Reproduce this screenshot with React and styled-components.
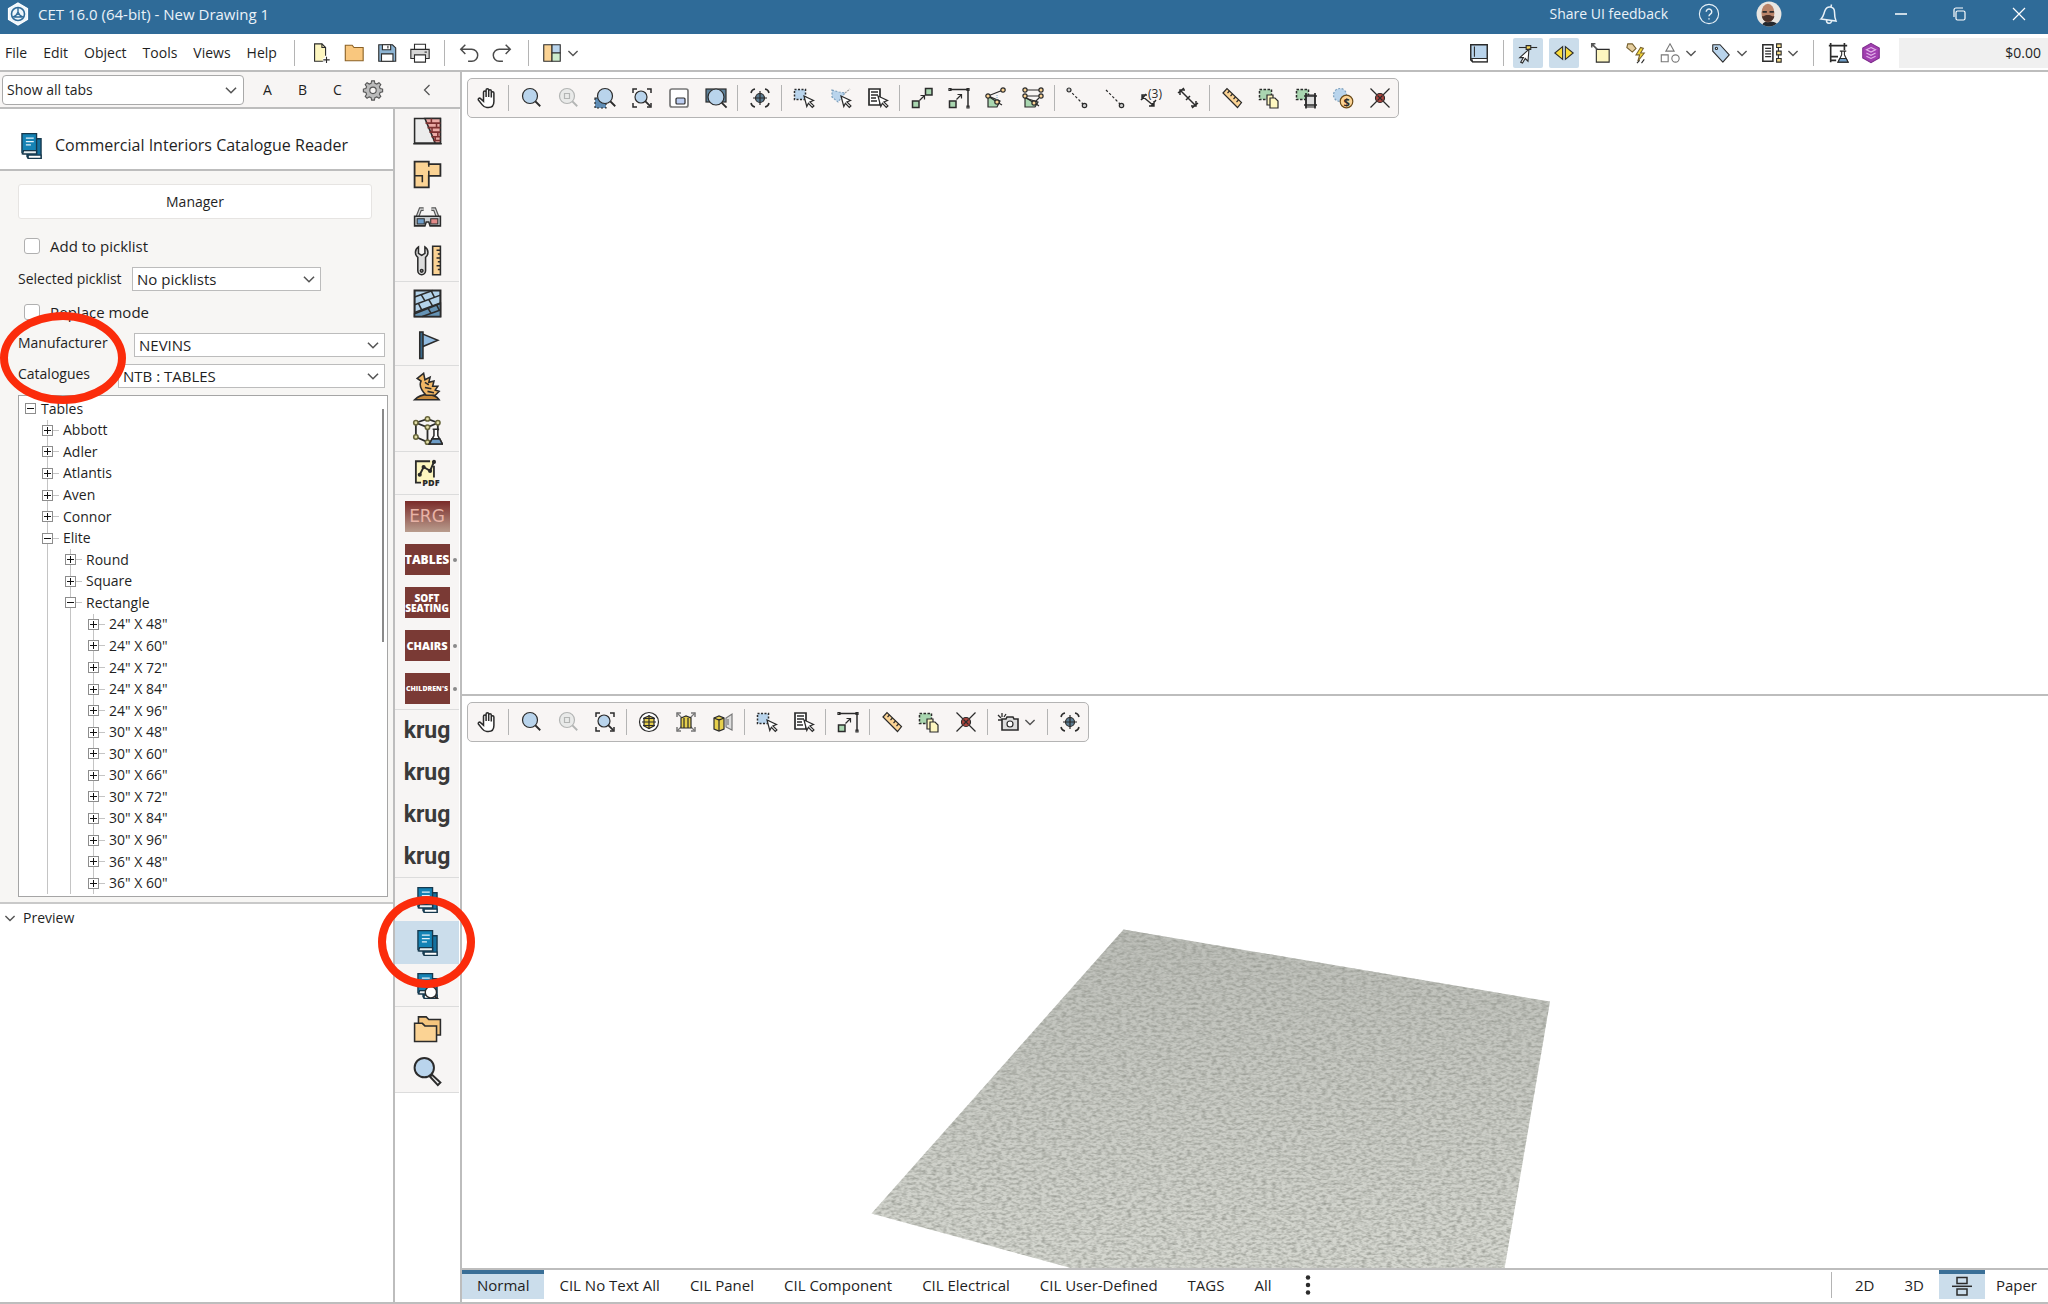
import React, {useState} from 'react';
import styled, {createGlobalStyle, css} from 'styled-components';

const INK = '#2b2b2b';
const BLUE = '#b9d4ec';
const GREEN = '#a9d6b0';
const YELLOW = '#fdf6c0';
const ORANGE = '#fbd394';
const LINE = '#bdbdbd';

const GlobalStyle = createGlobalStyle`
  * {
    box-sizing: border-box;
  }

  body {
    margin: 0;
    background: #fff;
    color: #1f1f1f;
    font: 14px/20px "Open Sans", "Noto Sans", sans-serif;
  }

  button, select, input {
    margin: 0;
    padding: 0;
    border: 0;
    background: none;
    color: inherit;
    font: inherit;
  }
`;

/* ---------- icons, drawn on a 24px grid ---------- */

const Lens = ({cx = 11, cy = 10, r = 7, fill = BLUE, color = INK}) => (
    <g stroke={color}>
        <path d={`M${cx + r * 0.7} ${cy + r * 0.7}L${cx + r * 0.7 + 5} ${cy + r * 0.7 + 5}`} strokeWidth="1.8"/>
        <circle cx={cx} cy={cy} r={r} fill={fill}/>
    </g>
);

const Pointer = () => <path d="M12 10l9.500 4.500-3.600 1.400 4 4-1.600 1.400-3.900-4-1.600 3.200z" fill="#fff"/>;

const Corners = ({color = INK}) => (
    <path d="M3 7V3h4M17 3h4v4M21 17v4h-4M7 21H3v-4" stroke={color} strokeWidth="1.500"/>
);

const Books = () => (
    <g stroke="#16384d">
        <path d="M8 6h12.500v17.500H9.500L8 22z" fill="#14719f"/>
        <path d="M9 23.500h11.500v-3H9z" fill="#fff"/>
        <path d="M3.500 1.500h13v18h-12l-1-1z" fill="#1583b5"/>
        <path d="M4 19.500h12.500v-3H5z" fill="#e9eef0"/>
        <path d="M7 5.500h7M7 8.500h7M7 11.500h4.500" stroke="#e4f2fa"/>
    </g>
);

const ICONS = {
    newFile: <><path d="M5 2h8l4 4v15H5z" fill={YELLOW}/><path d="M13 2v4h4"/><path d="M18 15v9M14 19.500h8" stroke="#fff" strokeWidth="4"/><path d="M18 16v7M14.500 19.500h7"/></>,
    folder: <path d="M2.500 3.500h7.500l2 2.500h10v14.500H2.500z" fill="#f9c77e" stroke="#8a6024"/>,
    save: <><path d="M3 3h15l3.500 3.500V21H3z" fill="#8db4d3"/><path d="M7 3h9v5.500H7zM6 13h12.500v8H6z" fill="#fff"/><path d="M13 4v3"/></>,
    print: <><path d="M6 8V2.500h12V8" fill="#fff"/><path d="M2 8h20v10H2z" fill="#d6d6d6"/><path d="M6 14h12v8H6z" fill="#fff"/><path d="M17 11h2.500"/></>,
    undo: <path d="M8 3L3 8l5 5M3 8h12a6.500 6.500 0 0 1 0 13h-4" stroke="#4a4a4a" strokeWidth="1.600"/>,
    redo: <path d="M16 3l5 5-5 5M21 8H9a6.500 6.500 0 0 0 0 13h4" stroke="#4a4a4a" strokeWidth="1.600"/>,
    layout: <><path d="M3 3h9v18H3z" fill={ORANGE}/><path d="M12 3h9v9h-9z" fill={BLUE}/><path d="M12 12h9v9h-9z" fill="#cdeccd"/></>,
    book: <><path d="M3 3h18v18.500H5l-2-2z" fill={BLUE} strokeWidth="1.600"/><path d="M4 18h17v3.500H5z" fill="#fff"/><path d="M7 5v11"/></>,
    snap: <><path d="M2 6h20"/><path d="M10 4h5v4h-5z" fill="#f5d65b"/><path d="M13 8L3 17h4l-3 5 2 1 3-5 3 3z" fill="#fff"/></>,
    arrows: <path d="M10.500 5v14L2 12zM13.500 5v14l8.500-7z" fill="#f9dc3c"/>,
    noteLink: <><path d="M8 8h14v14H8z" fill={YELLOW}/><path d="M9 8L3 2M3 6V2h4" stroke="#555" strokeWidth="1.700"/></>,
    bolt: <><path d="M3 2h5l4 5-4 4-6-5z" fill="#e6cfa0" stroke="#76602f"/><path d="M17 6l-5 8h4l-2 7 7-9h-4l3-5z" fill="#f9dc3c" stroke="#76602f"/><path d="M13 23l3-3M18 23l3-4"/></>,
    shapes: <g stroke="#777"><path d="M12 2l4.500 8h-9z"/><path d="M2.500 14h7.500v7.500H2.500z"/><circle cx="18" cy="18" r="4"/></g>,
    tag: <><path d="M3 3h8l10 11-7 8L3 10z" fill={BLUE} strokeLinejoin="round"/><circle cx="7" cy="7" r="1.200" fill="#fff"/></>,
    sheet: <><path d="M2 3h11v18H2z" fill="#fff" strokeWidth="1.700"/><path d="M4.500 7H11M4.500 10H11M4.500 13H11M4.500 16H11"/><path d="M19 4v16"/><path d="M17 2h5v4h-5zM17 10h5v4h-5zM17 18h5v4h-5z" fill="#f5dc8a"/></>,
    frameFlask: <><path d="M4 1v21M19 1v8M2 4h20M4 16h8M4 20h6" strokeWidth="1.800"/><path d="M14 10h7M16 10v4l-4 8h11l-4-8v-4" fill="#fff"/><path d="M14 18h7l2 4H12z" fill="#6d9cc6"/></>,
    gem: <><path d="M12 1.500l9 5v11l-9 5-9-5v-11z" fill="#a13fb0" stroke="#7e2c8c"/><path d="M12 6l5 2.500-5 2.500-5-2.500zM7 12l5 2.500 5-2.500M7 15.500l5 2.500 5-2.500" stroke="#e3b3ea"/></>,
    hand: <path d="M8.500 13V6.200a1.300 1.300 0 0 1 2.600 0V11M11.100 6.200V4a1.300 1.300 0 0 1 2.600 0v7M13.700 5a1.300 1.300 0 0 1 2.600 0v6.500M16.300 7a1.300 1.300 0 0 1 2.600 0v8.500c0 3.500-2 6-5.500 6h-1.600c-2.200 0-3.300-1-4.500-2.600L3.400 14c-.7-1.200 1-2.600 2.200-1.400l2.900 2.600V13" fill="#fff" strokeWidth="1.500"/>,
    zoom: <Lens r={7.5}/>,
    zoomOff: <><Lens r={7.5} fill="#e9eae9" color="#b3b5b4"/><path d="M8.500 7.500h5v5h-5z" stroke="#b3b5b4"/></>,
    zoomArea: <><path d="M2 12h11v10H2z" fill="#5f8cb4" strokeDasharray="2 2"/><Lens cx={12} r={7.5}/></>,
    zoomFit: <><Corners/><Lens cx={11} cy={11} r={6}/></>,
    pip: <><rect x="3" y="3" width="18" height="18" rx="2" fill="#fff" stroke="#777" strokeWidth="1.700"/><rect x="9" y="12" width="9" height="6" rx="1" fill="#bccdf0"/></>,
    zoomWindow: <><rect x="2" y="3" width="20" height="13" fill="#5f839c"/><Lens cx={12} cy={11} r={8}/></>,
    target: <><path d="M3 7a5 5 0 0 1 4-4M17 3a5 5 0 0 1 4 4M21 17a5 5 0 0 1-4 4M7 21a5 5 0 0 1-4-4" strokeWidth="1.500"/><circle cx="12" cy="12" r="4.500" fill="#5c7c92"/><path d="M12 5v14M5 12h14"/></>,
    selectBox: <><path d="M2.500 3.500h11v10h-11z" fill={BLUE} strokeDasharray="2 1.500" strokeWidth="1.500"/><Pointer/></>,
    selectPath: <><path d="M3 4l7 2 6 1-7 9-6-5z" fill={BLUE} stroke="#7da0bd" strokeDasharray="2 1.500"/><path d="M16 7l5-4" stroke="#999" strokeDasharray="2 1"/><Pointer/></>,
    selectList: <><path d="M3 3h11v16H3z" fill="#fff" strokeWidth="1.700"/><path d="M5 6h7M5 9h7M5 12h5M5 15h6" strokeWidth="1.400"/><Pointer/></>,
    scale: <><path d="M2.500 15h6.500v6.500H2.500zM15.500 2.500H22V9h-6.500z" fill={GREEN} strokeWidth="1.500"/><path d="M9.500 14.500l5-5M10.500 9.500h4v4"/></>,
    stretch: <><path d="M3 3.500h18V21" strokeWidth="1.500"/><path d="M2 2.500h2v2H2zM20 2.500h2v2h-2zM20 20h2v2h-2z"/><path d="M2.500 15H9v6.500H2.500z" fill={GREEN} strokeWidth="1.500"/><path d="M9.500 13.500l5-5M10.500 8.500h4v4"/></>,
    reshape: <><path d="M4 10v11h9l3-6z" fill={GREEN}/><path d="M4 10l15-6M4 10l9 6 5 3"/><path d="M13 9v6" stroke="#8db4d3" strokeDasharray="1 1"/><circle cx="19" cy="4" r="2.200" fill={ORANGE}/><circle cx="4" cy="10" r="2.200" fill={ORANGE}/><circle cx="13" cy="16" r="2.200" fill={ORANGE}/></>,
    reshapeAll: <><path d="M4 12v9h10l3-5z" fill={GREEN}/><path d="M4 4h16M4 10h16M4 11l9 6 5-5M14 17l4 3"/>{[[4, 4], [20, 4], [4, 10], [20, 10], [13, 17]].map(([x, y]) => <circle key={`${x}-${y}`} cx={x} cy={y} r="2.100" fill={ORANGE}/>)}</>,
    lineEnds: <><path d="M4 4l16 16" strokeDasharray="2.500 2"/><circle cx="4" cy="4" r="2" fill="#ccc"/><circle cx="19.500" cy="19.500" r="2.200" fill="#ccc"/></>,
    lineEnd: <><path d="M4 4l16 16" strokeDasharray="2.500 2"/><circle cx="19.500" cy="19.500" r="2.200" fill="#ccc"/></>,
    measureThree: <><path d="M3 10l12 10M3 14v-5h5M10 20h5v-5M7 8l-5 6M17 14l-5 6" strokeWidth="1.400"/><text x="9" y="12" fontSize="12" fill={INK} stroke="none" fontFamily="Open Sans">(3)</text></>,
    measure: <path d="M4 4l16 16M4 9V4h5M15 20h5v-5M2 7l6-5M16 22l6-5M10 14l4-4" strokeWidth="1.500"/>,
    ruler: <><path d="M3 7l4-4.500 14.500 14-4 5z" fill={ORANGE}/><path d="M9.500 5l-2 2M12.500 8l-2 2M15.500 11l-2 2M18.500 14l-2 2"/></>,
    copySel: <><path d="M2.500 3.500h12v10h-12z" fill={GREEN} strokeDasharray="2.500 1.500" strokeWidth="1.500"/><path d="M10 9h6v10h-6z" fill={YELLOW}/><path d="M13 12h5l3 3v7h-8z" fill={YELLOW}/></>,
    gridSel: <><path d="M2.500 3.500h12v10h-12z" fill={GREEN} strokeDasharray="2.500 1.500" strokeWidth="1.500"/><path d="M12 9h9v12h-9z" fill="#ddd"/><path d="M12 7v15.500M21 7v15.500M10 10h13M10 19h13" strokeWidth="1.700"/></>,
    priceSel: <><circle cx="9" cy="9" r="6.500" fill={BLUE} stroke="#7da0bd" strokeDasharray="2 1.500"/><circle cx="15.500" cy="15.500" r="6.300" fill={ORANGE} stroke="#6b4a17"/><text x="12.500" y="19.500" fontSize="11" fontWeight="700" fill={INK} stroke="none" fontFamily="Open Sans">$</text></>,
    cut: <><path d="M2.500 2.500l19 19M21.500 2.500l-19 19"/><circle cx="12" cy="12" r="4.500" fill="#b0433c"/><path d="M9.500 9.500l5 5M14.500 9.500l-5 5"/></>,
    orbit: <><circle cx="12" cy="12" r="9.500" fill="#fff"/><path d="M7 8l5-2 5 2v8l-5 2.500L7 16z" fill="#e6cf4c"/><path d="M12 5v14M5 12h14M6 8.500h12M6 15.500h12"/></>,
    expand: <><Corners color="#777"/><path d="M3 3l5 5M21 3l-5 5M3 21l5-5M21 21l-5-5" stroke="#777"/><path d="M7 8l5-2 5 2v10H7z" fill="#e6cf4c"/><path d="M10 8v10M14 8v10"/></>,
    box3d: <><path d="M3 8l5-2 5 2v11l-5 2-5-2z" fill="#e6cf4c"/><path d="M8 9v12M3 8l5 2 5-2"/><path d="M15 8v9l6 3V4zM17 9v6" fill="#ddd" stroke="#777"/></>,
    camera: <><path d="M6 3v4M2 5l3 3M10 4L8 7M2 10h4" strokeWidth="1.300"/><path d="M6 9h4l1-2h6l1 2h4v11H6z" fill="#ddd" strokeWidth="1.600"/><circle cx="14" cy="14" r="3" fill="#fff"/></>,
    gear: <><path d="M10.500 2h3l.6 2.700 2 .8 2.400-1.500 2 2-1.500 2.400.8 2 2.700.6v3l-2.700.6-.8 2 1.500 2.400-2 2-2.400-1.500-2 .8-.6 2.700h-3l-.6-2.700-2-.8L5.500 21l-2-2L5 16.600l-.8-2L1.500 14v-3l2.700-.6.8-2L3.500 6l2-2 2.400 1.500 2-.8z" fill="#bbb" stroke="#555"/><circle cx="12" cy="12.400" r="3.500" fill="#f7f5f4" stroke="#555"/></>,
    logo: <><path d="M12 1l9.500 5.500v11L12 23l-9.500-5.500v-11z" fill="#eef6fb" stroke="#fff"/><circle cx="12" cy="12" r="6.500" fill="#eef6fb" stroke="#2f6b98" strokeWidth="1.600"/><path d="M12 6v5M12 12l-5 3M12 12l5 3M9 15l3-5 3 5z" stroke="#2f6b98" strokeWidth="1.400"/></>,
    help: <g stroke="#e8f1f7"><circle cx="12" cy="12" r="10.500"/><path d="M9 9.500a3 3 0 1 1 4.500 2.600c-1 .6-1.500 1.100-1.500 2.400M12 16.500v1.500" strokeWidth="1.600"/></g>,
    bell: <path d="M4 17c2.500-2 2.500-4.500 4-8.500 1-2.500 3-4 5.500-3.500 3 .5 4 2.500 4 5 0 4 .5 6.500 1.500 9zM9.500 18.500c0 3.500 4.500 3.800 5 .5M14 5l.5-2.500" stroke="#e8f1f7" strokeWidth="1.500"/>,
    minimize: <path d="M6 12h12" stroke="#fff" strokeWidth="1.500"/>,
    restore: <g stroke="#fff"><rect x="8" y="9" width="9" height="9" rx="1.500"/><path d="M6 15V8a2 2 0 0 1 2-2h7"/></g>,
    close: <path d="M6 6l12 12M18 6L6 18" stroke="#fff"/>,
    split: <><path d="M7 3.500h10v6H7zM7 15h10v6H7z" strokeWidth="1.500"/><path d="M2 12.300h20" strokeWidth="1.500"/></>,
    dots: <g fill={INK} stroke="none"><circle cx="12" cy="3" r="2.700"/><circle cx="12" cy="12" r="2.700"/><circle cx="12" cy="21" r="2.700"/></g>,
    chevron: <path d="M6.500 9.500l5.500 5.500 5.500-5.500" stroke="#555" strokeWidth="1.700"/>,
    back: <path d="M15 6l-6 6 6 6" stroke="#555" strokeWidth="1.500"/>,
    avatar: <><clipPath id="face"><circle cx="12" cy="12" r="11.500"/></clipPath><g clipPath="url(#face)" stroke="none"><path d="M0 0h24v24H0z" fill="#e9e6e1"/><path d="M5 24c1-4 3-5 7-5s8 1 9 5z" fill="#24282d"/><ellipse cx="11" cy="11" rx="6" ry="8.500" fill="#b98368"/><path d="M5.500 14c1 7 10 7 11.500 0h-2c-2-1.500-6-1.500-8 0z" fill="#4a3129"/><path d="M6 10h4M12.500 10h4" stroke={INK} strokeWidth="1.500"/></g></>,
    books: <Books/>,
    booksSelected: <Books/>,
    bookSearch: <><Books/><Lens cx={15} cy={18} r={5} fill="#fff"/></>,
    wall: <><path d="M2 2h20v19H2z" fill="#ececec"/><path d="M10 2h12v19h-4z" fill="#eba9a5"/><path d="M10.500 5.500H22M12 9h10M13.500 12.500H22M15 16h7M16.500 19H22M15 2v3.500M19 5.500V9M15.500 9v3.500M20 12.500V16M18 16v3" stroke="#7d3030"/><path d="M1 21.500h22"/></>,
    floor: <><path d="M2 2h11v2h9v9h-9v9H2z" fill={ORANGE} strokeWidth="1.400"/><path d="M13 4v2M13 9v4M2 13h6v5"/></>,
    glasses: <><path d="M4 12l2.500-6.500H9M20 12l-2.500-6.500H15" strokeWidth="2.800" stroke="#555"/><path d="M4 12l2.500-6.500H9M20 12l-2.500-6.500H15" strokeWidth="1" stroke="#ddd"/><path d="M2 11h20v7.500h-8l-1-3h-2l-1 3H2z" fill="#c9cdd0"/><path d="M4 13h5.500v4H4z" fill="#6f9ecb" strokeWidth=".8"/><path d="M14.500 13H20v4h-5.500z" fill="#e28a88" strokeWidth=".8"/></>,
    tools: <><path d="M5 1.500v5l2.500 1.500L10 6.500v-5c3 2 3 6 .5 8v10.500a3 3 0 0 1-6 0V9.500C2 7.500 2 3.500 5 1.500z" fill="#dcdcdc"/><circle cx="7.500" cy="20" r="1"/><path d="M16 1h6v22h-6z" fill={ORANGE}/><path d="M19 4h3M20 7h2M19 10h3M20 13h2M19 16h3M20 19h2"/></>,
    pattern: <><path d="M2 2h20v20H2z" fill="#b4d3ea" strokeWidth="1.600"/><path d="M2 20l20-8v10H2z" fill="#6593b5"/><path d="M2 7l14-5M2 13l20-7.500M2 19l20-7.500M8 22l14-5M7 5l3 5M15 2.500l2.500 5M5 12l2.500 5M13 9l3 5M12 15l3 5M19 13l2 4" strokeWidth="1.200"/></>,
    flag: <><path d="M8 3l12 5-12 5z" fill="#93bce0"/><path d="M6 1.500h2.500V22H6z" fill="#3b6a8b"/></>,
    plant: <><path d="M2 21.500c3-3 6-4 10-4s7 1 9 4z" fill="#c88a3b"/><path d="M11 18C6 13 6 9 7 7l-3-2 5-4 1 5 4-2-1 4 4-1-1 4 4 0-2 3 3 1-3 3z" fill="#f1b765"/><path d="M10 8l3 2M10 12l5 1M12 15l5 1"/></>,
    cube: <><path d="M3 6l9-3 8 3-8 3.500zM3 6v11l9 4V9.500M20 6v6" strokeWidth="1.400"/>{[[12, 3], [3, 6], [20, 6], [12, 9.5], [3, 17], [12, 21]].map(([x, y]) => <circle key={`${x}-${y}`} cx={x} cy={y} r="1.700" fill="#e4e0a8" stroke="#66643a"/>)}<path d="M16 11h5M17 11v5l-3.500 6.500h10L20 16v-5" fill="#fff"/><path d="M15.500 18.500h6l2 4h-10z" fill="#6d9cc6"/></>,
    pdf: <><path d="M3 2h14v17H3z" fill={YELLOW} stroke="none"/><path d="M14 2.500H3V19h4M17 6v9" strokeWidth="1.400"/><path d="M6 13l3-6 5 3 3-7" strokeWidth="1.500"/><g fill={INK}><circle cx="6" cy="13" r="1"/><circle cx="9" cy="7" r="1"/><circle cx="14" cy="10" r="1"/><circle cx="17" cy="3" r="1"/></g><text x="8" y="22" fontSize="7" fontWeight="800" fill={INK} stroke="none" fontFamily="Open Sans">PDF</text></>,
    folders: <><path d="M5 3h6l2 2h9v12H5z" fill="#f5c57d"/><path d="M2 8h6l2 2h9v12H2z" fill={ORANGE}/></>,
    find: <><path d="M15.500 14.500l6.500 6-2 2-6-6.500z" fill="#eee" strokeWidth="1.500"/><circle cx="9.500" cy="9" r="7.500" fill={BLUE} strokeWidth="1.500"/></>,
};

const Svg = styled.svg`
  display: block;
  flex: none;
`;

const Icon = ({name, size = 24}) => (
    <Svg width={size} height={size} viewBox="0 0 24 24" fill="none" stroke={INK} strokeWidth="1.2" aria-hidden="true">
        {ICONS[name]}
    </Svg>
);

/* ---------- window chrome ---------- */

const Window = styled.div`
  position: relative;
  display: flex;
  flex-direction: column;
  height: 100vh;
  border-bottom: 2px solid ${LINE};
  overflow: hidden;
`;

const TitleBar = styled.header`
  display: flex;
  align-items: center;
  flex: none;
  height: 34px;
  padding-bottom: 6px;
  padding-left: 6px;
  background: #2f6b98;
  color: #eaf2f8;
`;

const Title = styled.h1`
  margin: 0 auto 0 8px;
  font-size: 15px;
  font-weight: 400;
`;

const TitleLink = styled.a`
  margin-right: 11px;
  color: inherit;
  text-decoration: none;
`;

const TitleButton = styled.button`
  display: grid;
  place-items: center;
  width: 60px;
  height: 28px;
`;

const WindowButtons = styled.div`
  display: flex;
  margin-left: 12px;

  ${TitleButton} {
    width: 59px;
  }
`;

const MenuBar = styled.div`
  display: flex;
  align-items: center;
  flex: none;
  height: 38px;
  padding-top: 1px;
  border-bottom: 2px solid ${LINE};
  background: #fff;
`;

const Menus = styled.nav`
  display: flex;
  gap: 16px;
  padding: 0 9px 0 5px;
`;

const Rule = styled.span`
  flex: none;
  width: 1px;
  height: 26px;
  margin: 0 ${({$gap = 8}) => $gap}px;
  background: #b4b4b4;
`;

const MenuTool = styled.button`
  display: flex;
  align-items: center;
  justify-content: center;
  width: ${({$wide}) => $wide ? 45 : 30}px;
  height: 30px;
  border-radius: 2px;
  background: ${({$active}) => $active ? '#cbddeb' : 'none'};
`;

const ToolGroup = styled.div`
  display: flex;
  align-items: center;
  gap: ${({$gap}) => $gap}px;
`;

const RightTools = styled(ToolGroup)`
  margin-left: auto;
`;

const Price = styled.input`
  width: 149px;
  height: 30px;
  margin-left: 7px;
  padding-right: 7px;
  background: #f0f0f0;
  text-align: right;
`;

/* ---------- sidebar ---------- */

const Body = styled.div`
  display: flex;
  flex: 1;
  min-height: 0;
`;

const Sidebar = styled.aside`
  display: flex;
  flex-direction: column;
  flex: none;
  width: 462px;
  border-right: 2px solid ${LINE};
`;

const TabsRow = styled.div`
  display: flex;
  align-items: center;
  flex: none;
  height: 37px;
  padding-left: 2px;
  border-bottom: 2px solid ${LINE};
  background: #f7f5f4;
`;

const TabButton = styled.button`
  display: grid;
  place-items: center;
  width: 35px;
  height: 30px;

  &:first-of-type {
    margin-left: 6px;
  }

  &:last-of-type {
    margin: 0 16px 0 auto;
  }
`;

const SelectBox = styled.span`
  position: relative;
  display: block;
  flex: ${({$width}) => $width ? 'none' : 1};
  width: ${({$width}) => $width ? `${$width}px` : 'auto'};

  svg {
    position: absolute;
    top: 50%;
    right: ${({$round}) => $round ? 2 : 1}px;
    margin-top: -11px;
    pointer-events: none;
  }
`;

const NativeSelect = styled.select`
  display: block;
  width: 100%;
  height: ${({$round}) => $round ? 30 : 24}px;
  padding-left: 4px;
  border: 1px solid ${({$round}) => $round ? '#a9a9a9' : '#bcbcbc'};
  border-radius: ${({$round}) => $round ? 4 : 0}px;
  background: #fff;
  font-size: ${({$round}) => $round ? 14 : 15}px;
  appearance: none;
`;

const SidebarBody = styled.div`
  display: flex;
  flex: 1;
  min-height: 0;
`;

const Panel = styled.section`
  display: flex;
  flex-direction: column;
  flex: 1;
  min-width: 0;
`;

const PanelTitle = styled.header`
  display: flex;
  align-items: center;
  gap: 10px;
  flex: none;
  height: 62px;
  padding: 12px 0 0 18px;
  border-bottom: 2px solid ${LINE};

  h2 {
    margin: 0;
    font-size: 16px;
    font-weight: 400;
    white-space: nowrap;
  }
`;

const PanelBody = styled.div`
  display: flex;
  flex-direction: column;
  flex: 1;
  min-height: 0;
  padding: 13px 5px 5px 18px;
  border-bottom: 2px solid #c9c9c9;
  background: #f7f6f4;
`;

const ManagerButton = styled.button`
  flex: none;
  height: 35px;
  margin: 0 16px 10px 0;
  border: 1px solid #e6e4e2;
  border-radius: 3px;
  background: #fff;
`;

const Field = styled.div`
  display: flex;
  align-items: center;
  flex: none;
  height: ${({$tight}) => $tight ? 29 : 33}px;
  padding-right: 3px;

  > label:first-child {
    min-width: ${({$label}) => $label}px;
    padding-bottom: ${({$raised}) => $raised ? 4 : 0}px;
  }
`;

const CheckLabel = styled.label`
  display: flex;
  align-items: center;
  gap: 10px;
  flex: none;
  height: 33px;
  padding-left: 6px;
  font-size: 15px;
`;

const Check = styled.input.attrs({type: 'checkbox'})`
  width: 16px;
  height: 16px;
  border: 1px solid #b0b0b0;
  border-radius: 3px;
  background: #fff;
  appearance: none;

  &:checked {
    background: #2f6b98;
  }
`;

const TreeBox = styled.div`
  display: flex;
  flex: 1;
  min-height: 0;
  margin-top: 5px;
  padding: 2px 3px 2px 0;
  border: 1px solid #a5a5a5;
  background: #fff;
`;

const TreeList = styled.ul`
  display: flex;
  flex-direction: column;
  flex: 1;
  margin: 0;
  padding: 0;
  list-style: none;
`;

const TreeItem = styled.li`
  display: flex;
  align-items: center;
  flex: 1;
  min-height: 0;
  padding-left: ${({$level}) => $level ? 17 : 0}px;
`;

const guide = css`
  background: linear-gradient(#c4c4c4, #c4c4c4) 11px 0 / 1px 100% no-repeat;
`;

const Guide = styled.span`
  align-self: stretch;
  width: 23px;
  ${guide}
`;

const Branch = styled.span`
  display: flex;
  align-items: center;
  align-self: stretch;
  width: ${({$level}) => $level ? 27 : 22}px;
  padding-left: 6px;
  ${({$level}) => $level > 0 && guide}

  &::after {
    content: '';
    flex: none;
    width: ${({$level}) => $level ? 6 : 0}px;
    height: 1px;
    background: #c4c4c4;
  }
`;

const Toggle = styled.button`
  display: block;
  flex: none;
  width: 11px;
  height: 11px;
  border: 1px solid #8d8d8d;
  background:
    linear-gradient(#111, #111) center / 7px 1px no-repeat,
    linear-gradient(#111, #111) center / ${({$open}) => $open ? 0 : 1}px 7px no-repeat,
    #fff;
`;

const TreeScroll = styled.span`
  width: 2px;
  height: 233px;
  margin-top: 11px;
  background: #8a8a8a;
`;

const Preview = styled.section`
  flex: none;
  height: 398px;
  padding-top: 4px;
`;

const PreviewToggle = styled.button`
  display: flex;
  align-items: center;
  gap: 3px;
`;

/* ---------- library rail ---------- */

const Rail = styled.nav`
  flex: none;
  width: 67px;
  padding-right: 1px;
  border-left: 2px solid ${LINE};
`;

const RailGroup = styled.div`
  background: #f7f5f4;
  box-shadow: inset 0 -1px #dcdcdc;

  &:first-child {
    padding-top: 1px;
  }
`;

const RailButton = styled.button`
  position: relative;
  display: grid;
  place-items: center;
  width: 100%;
  height: ${({$short}) => $short ? 42 : 43}px;
  background: ${({$active}) => $active ? '#cbddeb' : 'none'};
`;

const Badge = styled.span`
  display: grid;
  place-items: center;
  width: 45px;
  height: 31px;
  overflow: hidden;
  background: #7a3a35;
  color: #fff;
  font-size: ${({$size}) => $size}px;
  line-height: ${({$size}) => $size}px;
  font-weight: 800;
`;

const ErgBadge = styled(Badge)`
  background: linear-gradient(#7a2b29, #b99d8e);
  color: #e8b3a6;
  font: 17px/17px "DejaVu Sans", sans-serif;
`;

const Krug = styled.span`
  color: #3a3a3a;
  font: 700 23px/30px Roboto, sans-serif;
`;

const MoreDot = styled.i`
  position: absolute;
  top: 20px;
  right: 2px;
  width: 4px;
  height: 4px;
  border-radius: 50%;
  background: #8a8a8a;
`;

/* ---------- drawing views ---------- */

const Main = styled.main`
  display: flex;
  flex-direction: column;
  flex: 1;
  min-width: 0;
`;

const View = styled.section`
  position: relative;
  flex: ${({$share}) => $share} 1 0;
  min-height: 0;
  padding: 6px 5px;
  overflow: hidden;
  border-bottom: 2px solid ${LINE};
`;

const Scene = styled.svg`
  position: absolute;
  inset: 0;
  width: 100%;
  height: 100%;
`;

const Toolbar = styled.div`
  position: relative;
  display: inline-flex;
  align-items: center;
  height: 40px;
  border: 1px solid #b4b4b4;
  border-radius: 5px;
  background: #f8f5f4;
`;

const ToolButton = styled.button`
  display: flex;
  align-items: center;
  justify-content: center;
  width: ${({$wide}) => $wide ? 53 : 37}px;
  height: 36px;
`;

const StatusBar = styled.footer`
  display: flex;
  align-items: flex-start;
  flex: none;
  height: 32px;
  font-size: 15px;
`;

const StatusTab = styled.button`
  display: grid;
  place-items: center;
  height: 29px;
  padding: 0 ${({$narrow}) => $narrow ? 11 : 15}px 4px;
  border-top: 4px solid ${({$active}) => $active ? '#3a6f97' : 'transparent'};
  background: ${({$active}) => $active ? '#cbddeb' : 'none'};
`;

const ViewModes = styled.div`
  display: flex;
  align-items: center;
  margin-left: auto;
`;

/* Highlights the controls the user has to find first */
const Ring = styled.span`
  position: absolute;
  left: ${({$x}) => $x}px;
  top: ${({$y}) => $y}px;
  width: ${({$w}) => $w}px;
  height: 92px;
  border: 8px solid #fb2c0b;
  border-radius: 50%;
  pointer-events: none;
`;

/* ---------- data ---------- */

const TREE = [
    [0, 'Tables', true],
    ...['Abbott', 'Adler', 'Atlantis', 'Aven', 'Connor'].map((name) => [1, name]),
    [1, 'Elite', true],
    [2, 'Round'],
    [2, 'Square'],
    [2, 'Rectangle', true],
    ...[
        '24" X 48"', '24" X 60"', '24" X 72"', '24" X 84"', '24" X 96"',
        '30" X 48"', '30" X 60"', '30" X 66"', '30" X 72"', '30" X 84"', '30" X 96"',
        '36" X 48"', '36" X 60"',
    ].map((name) => [3, name]),
];

const PLAN_TOOLS = [
    'hand', '|', 'zoom', 'zoomOff', 'zoomArea', 'zoomFit', 'pip', 'zoomWindow', '|', 'target', '|',
    'selectBox', 'selectPath', 'selectList', '|', 'scale', 'stretch', 'reshape', 'reshapeAll', '|',
    'lineEnds', 'lineEnd', 'measureThree', 'measure', '|', 'ruler', 'copySel', 'gridSel', 'priceSel', 'cut',
];

const SCENE_TOOLS = [
    'hand', '|', 'zoom', 'zoomOff', 'zoomFit', '|', 'orbit', 'expand', 'box3d', '|',
    'selectBox', 'selectList', '|', 'stretch', '|', 'ruler', 'copySel', 'cut', '|', 'camera', '|', 'target',
];

const RAIL = [
    {items: ['wall', 'floor', 'glasses', 'tools']},
    {short: true, items: ['pattern', 'flag']},
    {items: ['plant', 'cube']},
    {items: ['pdf']},
    {
        items: [
            {label: 'ERG', erg: true},
            {label: 'TABLES', size: 12, more: true},
            {label: <>SOFT<br/>SEATING</>, size: 10},
            {label: 'CHAIRS', size: 11, more: true},
            {label: 'CHILDREN\'S', size: 7, more: true},
        ],
    },
    {short: true, items: [{krug: true}, {krug: true}, {krug: true}, {krug: true}]},
    {items: ['books', 'booksSelected', 'bookSearch']},
    {items: ['folders', 'find']},
];

const STATUS_TABS = [
    'Normal', 'CIL No Text All', 'CIL Panel', 'CIL Component',
    'CIL Electrical', 'CIL User-Defined', 'TAGS', 'All',
];

const Select = ({id, value, width, round, label}) => (
    <SelectBox $width={width} $round={round}>
        <NativeSelect id={id} $round={round} aria-label={label} defaultValue={value}>
            <option>{value}</option>
        </NativeSelect>
        <Icon name="chevron" size={22}/>
    </SelectBox>
);

const Tools = ({items, label}) => (
    <Toolbar role="toolbar" aria-label={label}>
        {items.map((name, i) => name === '|' ? <Rule key={i} $gap={3}/> : (
            <ToolButton key={i} aria-label={name} $wide={name === 'camera'}>
                <Icon name={name}/>
                {name === 'camera' && <Icon name="chevron" size={20}/>}
            </ToolButton>
        ))}
    </Toolbar>
);

const RailEntry = ({item, short}) => {
    if (typeof item === 'string') {
        return (
            <RailButton aria-label={item} $short={short} $active={item === 'booksSelected'}>
                <Icon name={item} size={/book/.test(item) ? 27 : 31}/>
            </RailButton>
        );
    }
    if (item.krug) return <RailButton $short={short}><Krug>krug</Krug></RailButton>;
    return (
        <RailButton>
            {item.erg ? <ErgBadge>{item.label}</ErgBadge> : <Badge $size={item.size}>{item.label}</Badge>}
            {item.more && <MoreDot/>}
        </RailButton>
    );
};

const Tree = () => (
    <TreeBox>
        <TreeList role="tree" aria-label="Catalogue">
            {TREE.map(([level, name, open]) => (
                <TreeItem key={name} role="treeitem" $level={level}>
                    {Array.from({length: Math.max(level - 1, 0)}, (_, i) => <Guide key={i}/>)}
                    <Branch $level={level}>
                        <Toggle aria-label={name} $open={open}/>
                    </Branch>
                    {name}
                </TreeItem>
            ))}
        </TreeList>
        <TreeScroll/>
    </TreeBox>
);

const Carpet = () => (
    <Scene viewBox="0 0 1586 572" preserveAspectRatio="xMidYMax slice" aria-hidden="true">
        <defs>
            <linearGradient id="carpet" x1="0" y1="0" x2="0" y2="1">
                <stop offset="0" stopColor="#bcbeb8"/>
                <stop offset="1" stopColor="#d6d8d1"/>
            </linearGradient>
            <filter id="weave" x="0" y="0" width="100%" height="100%" colorInterpolationFilters="sRGB">
                <feTurbulence type="fractalNoise" baseFrequency="0.2 0.4" numOctaves="2" seed="4"/>
                <feColorMatrix values="0 0 0 0 0.56  0 0 0 0 0.57  0 0 0 0 0.54  0 1.6 0 0 -0.6"/>
                <feComposite in2="SourceGraphic" operator="in"/>
            </filter>
        </defs>
        <path d="M661.500 234L1088 306l-46 270H622L409.500 518z" fill="url(#carpet)"/>
        <path d="M661.500 234L1088 306l-46 270H622L409.500 518z" filter="url(#weave)"/>
    </Scene>
);

export default function App() {
    const [statusTab, setStatusTab] = useState('Normal');

    return (
        <Window>
            <GlobalStyle/>
            <TitleBar>
                <Icon name="logo"/>
                <Title>CET 16.0 (64-bit) - New Drawing 1</Title>
                <TitleLink href="#feedback">Share UI feedback</TitleLink>
                <TitleButton aria-label="Help"><Icon name="help" size={22}/></TitleButton>
                <TitleButton aria-label="Account"><Icon name="avatar" size={26}/></TitleButton>
                <TitleButton aria-label="Notifications"><Icon name="bell"/></TitleButton>
                <WindowButtons>
                    <TitleButton aria-label="Minimize"><Icon name="minimize"/></TitleButton>
                    <TitleButton aria-label="Restore"><Icon name="restore"/></TitleButton>
                    <TitleButton aria-label="Close"><Icon name="close"/></TitleButton>
                </WindowButtons>
            </TitleBar>

            <MenuBar>
                <Menus>
                    {['File', 'Edit', 'Object', 'Tools', 'Views', 'Help'].map((name) => <button key={name}>{name}</button>)}
                </Menus>
                <ToolGroup $gap={3}>
                    <Rule/>
                    {['newFile', 'folder', 'save', 'print'].map((name) => (
                        <MenuTool key={name} aria-label={name}><Icon name={name} size={22}/></MenuTool>
                    ))}
                    <Rule $gap={6}/>
                    <MenuTool aria-label="Undo"><Icon name="undo" size={22}/></MenuTool>
                    <MenuTool aria-label="Redo"><Icon name="redo" size={22}/></MenuTool>
                    <Rule/>
                    <MenuTool aria-label="Layout" $wide><Icon name="layout" size={22}/><Icon name="chevron" size={20}/></MenuTool>
                </ToolGroup>
                <RightTools $gap={6}>
                    <MenuTool aria-label="Library"><Icon name="book" size={22}/></MenuTool>
                    <Rule $gap={3}/>
                    <MenuTool aria-label="Snap" $active><Icon name="snap" size={22}/></MenuTool>
                    <MenuTool aria-label="Flip" $active><Icon name="arrows" size={22}/></MenuTool>
                    <MenuTool aria-label="Note"><Icon name="noteLink" size={22}/></MenuTool>
                    <MenuTool aria-label="Quick"><Icon name="bolt" size={22}/></MenuTool>
                    {['shapes', 'tag', 'sheet'].map((name) => (
                        <MenuTool key={name} aria-label={name} $wide>
                            <Icon name={name} size={22}/>
                            <Icon name="chevron" size={20}/>
                        </MenuTool>
                    ))}
                    <Rule $gap={3}/>
                    <ToolGroup $gap={3}>
                        <MenuTool aria-label="Lab"><Icon name="frameFlask" size={22}/></MenuTool>
                        <MenuTool aria-label="Layers"><Icon name="gem" size={22}/></MenuTool>
                    </ToolGroup>
                    <Price aria-label="Total price" value="$0.00" readOnly/>
                </RightTools>
            </MenuBar>

            <Body>
                <Sidebar>
                    <TabsRow>
                        <Select label="Tabs" value="Show all tabs" width={242} round/>
                        <TabButton>A</TabButton>
                        <TabButton>B</TabButton>
                        <TabButton>C</TabButton>
                        <TabButton aria-label="Settings"><Icon name="gear" size={22}/></TabButton>
                        <TabButton aria-label="Collapse"><Icon name="back" size={20}/></TabButton>
                    </TabsRow>
                    <SidebarBody>
                        <Panel>
                            <PanelTitle>
                                <Icon name="books" size={27}/>
                                <h2>Commercial Interiors Catalogue Reader</h2>
                            </PanelTitle>
                            <PanelBody>
                                <ManagerButton>Manager</ManagerButton>
                                <CheckLabel><Check/>Add to picklist</CheckLabel>
                                <Field $label={114}>
                                    <label htmlFor="picklist">Selected picklist</label>
                                    <Select id="picklist" value="No picklists" width={189}/>
                                </Field>
                                <CheckLabel><Check/>Replace mode</CheckLabel>
                                <Field $label={116} $raised>
                                    <label htmlFor="manufacturer">Manufacturer</label>
                                    <Select id="manufacturer" value="NEVINS"/>
                                </Field>
                                <Field $label={100} $raised $tight>
                                    <label htmlFor="catalogues">Catalogues</label>
                                    <Select id="catalogues" value="NTB : TABLES"/>
                                </Field>
                                <Tree/>
                            </PanelBody>
                            <Preview>
                                <PreviewToggle><Icon name="chevron" size={20}/>Preview</PreviewToggle>
                            </Preview>
                        </Panel>
                        <Rail aria-label="Libraries">
                            {RAIL.map(({items, short}, i) => (
                                <RailGroup key={i}>
                                    {items.map((item, j) => <RailEntry key={j} item={item} short={short}/>)}
                                </RailGroup>
                            ))}
                        </Rail>
                    </SidebarBody>
                </Sidebar>

                <Main>
                    <View $share={12}>
                        <Tools items={PLAN_TOOLS} label="Plan tools"/>
                    </View>
                    <View $share={11}>
                        <Carpet/>
                        <Tools items={SCENE_TOOLS} label="3D tools"/>
                    </View>
                    <StatusBar>
                        {STATUS_TABS.map((name) => (
                            <StatusTab key={name} $active={name === statusTab} onClick={() => setStatusTab(name)}>
                                {name}
                            </StatusTab>
                        ))}
                        <StatusTab aria-label="More views" $narrow><Icon name="dots" size={20}/></StatusTab>
                        <ViewModes>
                            <Rule/>
                            <StatusTab>2D</StatusTab>
                            <StatusTab>3D</StatusTab>
                            <StatusTab $active $narrow aria-label="Split view"><Icon name="split"/></StatusTab>
                            <StatusTab $narrow>Paper</StatusTab>
                        </ViewModes>
                    </StatusBar>
                </Main>
            </Body>

            <Ring $x={0} $y={312} $w={126}/>
            <Ring $x={378} $y={896} $w={97}/>
        </Window>
    );
}
